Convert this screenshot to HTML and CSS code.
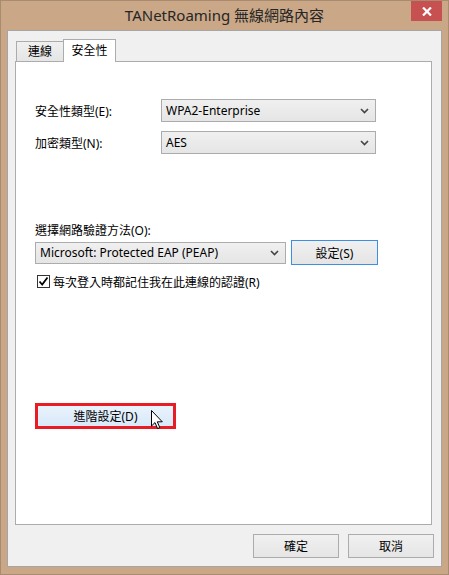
FILE: index.html
```html
<!DOCTYPE html>
<html lang="zh-Hant">
<head>
<meta charset="utf-8">
<title>TANetRoaming 無線網路內容</title>
<link rel="stylesheet" href="styles.css">
</head>
<body>
<div class="window">
  <div class="titlebar">
    <span></span>
    <div class="title">TANetRoaming 無線網路內容</div>
    <div class="close">
      <svg width="10" height="9" viewBox="0 0 10 9"><path d="M1 0.5 L9 8.5 M9 0.5 L1 8.5" stroke="#fff" stroke-width="2.2" fill="none"/></svg>
    </div>
  </div>
  <div class="client">
    <div class="tabs">
      <div class="tab">連線</div>
      <div class="tab active">安全性</div>
    </div>
    <div class="pane">
      <div class="row">
        <div class="label">安全性類型(E):</div>
        <div class="select wide"><span>WPA2-Enterprise</span><svg class="chev" width="9" height="6" viewBox="0 0 9 6"><path d="M1 1 L4.5 4.5 L8 1" stroke="#444" stroke-width="1.6" fill="none"/></svg></div>
      </div>
      <div class="row second">
        <div class="label">加密類型(N):</div>
        <div class="select wide"><span>AES</span><svg class="chev" width="9" height="6" viewBox="0 0 9 6"><path d="M1 1 L4.5 4.5 L8 1" stroke="#444" stroke-width="1.6" fill="none"/></svg></div>
      </div>
      <div class="method-label">選擇網路驗證方法(O):</div>
      <div class="method-row">
        <div class="select method"><span>Microsoft: Protected EAP (PEAP)</span><svg class="chev" width="9" height="6" viewBox="0 0 9 6"><path d="M1 1 L4.5 4.5 L8 1" stroke="#444" stroke-width="1.6" fill="none"/></svg></div>
        <div class="btn focus">設定(S)</div>
      </div>
      <div class="check-row">
        <div class="checkbox"><svg width="11" height="11" viewBox="0 0 11 11"><path d="M1.5 5.5 L4.2 8.5 L9.5 1.5" stroke="#000" stroke-width="1.8" fill="none"/></svg></div>
        <span>每次登入時都記住我在此連線的認證(R)</span>
      </div>
      <div class="adv-wrap">
        <div class="btn adv">進階設定(D)</div>
        <svg class="cursor" width="13" height="20" viewBox="0 0 13 20"><path d="M0.5 0.5 L0.5 16 L4 12.6 L6.6 18.6 L8.8 17.6 L6.3 11.8 L11.3 11.8 Z" fill="#fff" stroke="#000" stroke-width="1"/></svg>
      </div>
    </div>
    <div class="footer">
      <div class="btn dlg">確定</div>
      <div class="btn dlg">取消</div>
    </div>
  </div>
</div>
</body>
</html>
```
FILE: styles.css
```css
* { box-sizing: border-box; }
html, body { margin: 0; padding: 0; }
body {
  font-family: "Noto Sans", "Noto Sans CJK TC", sans-serif;
  font-size: 12px;
  color: #000;
}
.window {
  width: 449px;
  height: 575px;
  border: 1px solid #a98b6f;
  background: #c9a787;
  padding: 0 6px 7px 6px;
  display: flex;
  flex-direction: column;
}
.titlebar {
  height: 29px;
  display: grid;
  grid-template-columns: 1fr auto 1fr;
  margin: 0 -6px 0 -6px;
}
.title {
  font-family: "Noto Sans", "Noto Sans CJK TC", sans-serif;
  font-size: 15px;
  color: #262626;
  line-height: 29px;
  white-space: nowrap;
}
.close {
  justify-self: end;
  width: 31px;
  height: 20px;
  margin-right: 6px;
  background: #c75050;
  display: flex;
  align-items: center;
  justify-content: center;
}
.client {
  flex: 1;
  border: 1px solid #a5a5a5;
  background: #f0f0f0;
  padding-top: 8px;
  display: flex;
  flex-direction: column;
}
.tabs {
  display: flex;
  align-items: flex-end;
  height: 23px;
  padding-left: 8px;
}
.tab {
  height: 21px;
  width: 47px;
  border: 1px solid #acacac;
  border-right: none;
  background: linear-gradient(#f0f0f0, #e5e5e5);
  display: flex;
  justify-content: center;
  align-items: center;
  padding-bottom: 1px;
  font-size: 12px;
}
.tab.active {
  height: 23px;
  width: 53px;
  background: #fff;
  border: 1px solid #acacac;
  border-bottom: none;
  position: relative;
  z-index: 1;
  padding-bottom: 3px;
}
.pane {
  margin: -1px 0 0 7px;
  width: 417px;
  height: 464px;
  background: #fff;
  border: 1px solid #acacac;
  padding: 37px 0 0 19px;
}
.row {
  display: flex;
  align-items: center;
  height: 23px;
}
.row.second { margin-top: 9px; }
.label { width: 126px; white-space: nowrap; }
.select {
  height: 23px;
  border: 1px solid #acacac;
  background: linear-gradient(#f0f0f0, #e5e5e5);
  display: flex;
  align-items: center;
  justify-content: space-between;
  padding: 0 6px 0 4px;
  white-space: nowrap;
}
.select.wide { width: 215px; }
.select.method { width: 251px; height: 22px; }
.chev { flex: none; }
.method-label {
  margin-top: 69px;
  line-height: 16px;
}
.method-row {
  display: flex;
  align-items: center;
  margin-top: 1px;
  height: 25px;
  gap: 5px;
}
.btn {
  border: 1px solid #acacac;
  background: linear-gradient(#f0f0f0, #e5e5e5);
  display: flex;
  align-items: center;
  justify-content: center;
  white-space: nowrap;
}
.btn.focus {
  width: 87px;
  height: 25px;
  border-color: #3c8fe3;
}
.check-row {
  display: flex;
  align-items: center;
  margin-top: 8px;
  padding-left: 2px;
  height: 17px;
  gap: 3px;
}
.checkbox {
  width: 13px;
  height: 13px;
  border: 1px solid #333;
  background: #fff;
  display: flex;
  align-items: center;
  justify-content: center;
}
.adv-wrap {
  position: relative;
  margin-top: 113px;
  width: 141px;
}
.btn.adv {
  width: 141px;
  height: 26px;
  border: 3px solid #e81c24;
  background: linear-gradient(#e9f3fc, #d8e9f9);
}
.cursor {
  position: absolute;
  left: 116px;
  top: 7px;
}
.footer {
  display: flex;
  justify-content: flex-end;
  gap: 9px;
  margin-top: 9px;
  padding-right: 7px;
}
.btn.dlg {
  width: 86px;
  height: 24px;
}
```
